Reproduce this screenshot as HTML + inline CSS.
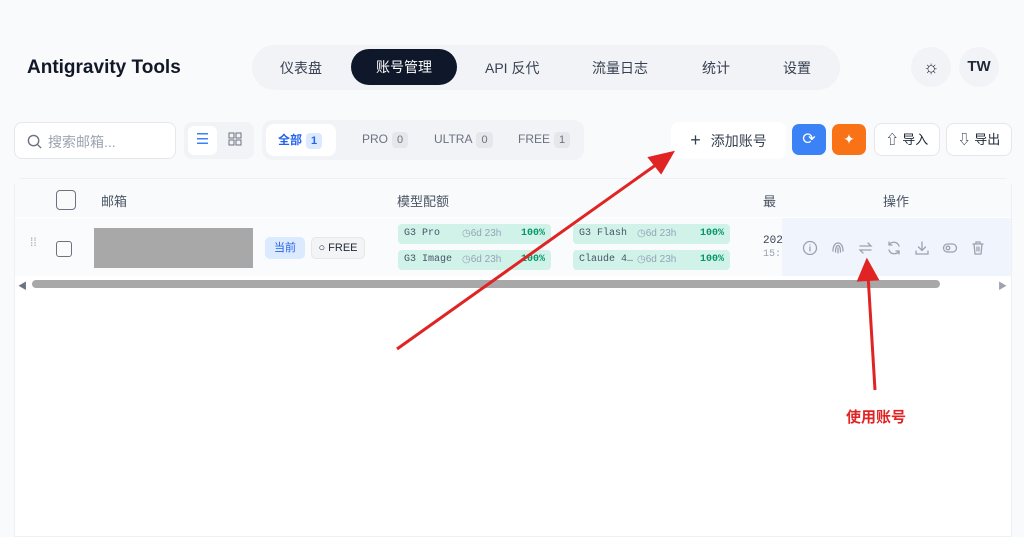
<!DOCTYPE html>
<html><head><meta charset="utf-8"><style>
*{box-sizing:border-box;margin:0;padding:0}
body{width:1024px;height:537px;overflow:hidden;background:#f8fafc;font-family:"Liberation Sans","Noto Sans CJK SC",sans-serif;color:#1f2937;position:relative}
.abs{position:absolute}
.nav{left:252px;top:45px;width:588px;height:45px;background:#f1f3f6;border-radius:23px}
.nav span{position:absolute;top:13px;font-size:14px;color:#374151}
.act{left:351px;top:49px;width:106px;height:36px;background:#0f172a;border-radius:18px;color:#fff;font-size:14px;text-align:center;line-height:36px}
.circ{width:40px;height:40px;border-radius:20px;background:#f1f3f6;text-align:center;line-height:40px;font-weight:bold;font-size:15px}
.btn{background:#fff;border:1px solid #e5e7eb;border-radius:8px;font-size:13px;text-align:center}
.chip{background:#d1f2e8;border-radius:4px;height:20px;font-family:"Liberation Mono",monospace;font-size:10px;color:#475569;line-height:20px;padding-left:6px}
.chip b{position:absolute;right:6px;color:#059669}
.chip i{position:absolute;left:64px;font-style:normal;color:#94a3b8;font-family:"Liberation Sans",sans-serif}
.cnt{display:inline-block;background:#e5e7eb;border-radius:4px;padding:0 5px;font-size:11px;margin-left:4px;line-height:16px}
</style></head><body>
<div class="abs" style="left:27px;top:57px;font-size:19px;font-weight:bold;color:#111827">Antigravity Tools</div>
<div class="abs nav">
<span style="left:28px">仪表盘</span><span style="left:233px">API 反代</span><span style="left:340px">流量日志</span><span style="left:450px">统计</span><span style="left:531px">设置</span></div>
<div class="abs act">账号管理</div>
<div class="abs circ" style="left:911px;top:47px;font-size:18px;font-weight:normal">☼</div>
<div class="abs circ" style="left:959px;top:47px">TW</div>

<div class="abs btn" style="left:14px;top:122px;width:162px;height:37px;text-align:left;color:#9ca3af;font-size:14px;padding:9px 0 0 12px">
<svg width="15" height="15" viewBox="0 0 16 16" style="vertical-align:-2px;margin-right:6px"><circle cx="7" cy="7" r="5.5" fill="none" stroke="#6b7280" stroke-width="1.5"/><path d="M11 11l4 4" stroke="#6b7280" stroke-width="1.5"/></svg>搜索邮箱...</div>
<div class="abs" style="left:184px;top:122px;width:70px;height:37px;background:#f1f3f6;border-radius:8px"></div>
<div class="abs" style="left:188px;top:126px;width:29px;height:29px;background:#fff;border-radius:6px;color:#3b82f6;text-align:center;line-height:28px;font-size:15px">☰</div>
<div class="abs" style="left:228px;top:132px;width:14px;height:14px"><svg width="14" height="14"><rect x="1" y="1" width="5" height="5" fill="none" stroke="#6b7280"/><rect x="8" y="1" width="5" height="5" fill="none" stroke="#6b7280"/><rect x="1" y="8" width="5" height="5" fill="none" stroke="#6b7280"/><rect x="8" y="8" width="5" height="5" fill="none" stroke="#6b7280"/></svg></div>
<div class="abs" style="left:262px;top:120px;width:322px;height:40px;background:#f1f3f6;border-radius:10px"></div>
<div class="abs" style="left:266px;top:124px;width:70px;height:32px;background:#fff;border-radius:8px;font-size:12px;color:#2563eb;font-weight:bold;line-height:32px;padding-left:12px">全部<span class="cnt" style="background:#dbeafe">1</span></div>
<div class="abs" style="left:362px;top:132px;font-size:12px;color:#6b7280">PRO<span class="cnt">0</span></div>
<div class="abs" style="left:434px;top:132px;font-size:12px;color:#6b7280">ULTRA<span class="cnt">0</span></div>
<div class="abs" style="left:518px;top:132px;font-size:12px;color:#6b7280">FREE<span class="cnt">1</span></div>

<div class="abs btn" style="left:671px;top:122px;width:115px;height:37px;border:none;font-size:14px;line-height:37px;color:#374151"><span style="font-size:18px;margin-right:10px">+</span>添加账号</div>
<div class="abs" style="left:792px;top:124px;width:34px;height:31px;background:#3b82f6;border-radius:7px;color:#fff;text-align:center;line-height:31px;font-size:16px">⟳</div>
<div class="abs" style="left:832px;top:124px;width:34px;height:31px;background:#f97316;border-radius:7px;color:#fff;text-align:center;line-height:31px;font-size:14px">✦</div>
<div class="abs btn" style="left:874px;top:123px;width:66px;height:33px;line-height:31px">⇧ 导入</div>
<div class="abs btn" style="left:946px;top:123px;width:66px;height:33px;line-height:31px">⇩ 导出</div>

<div class="abs" style="left:14px;top:178px;width:998px;height:359px;background:#fff;border:1px solid #eef0f3;border-radius:8px 8px 0 0"></div>
<div class="abs" style="left:15px;top:179px;width:996px;height:38px;background:#f8fafc"></div>
<div class="abs" style="left:56px;top:190px;width:20px;height:20px;border:1.5px solid #6b7280;border-radius:4px"></div>
<div class="abs" style="left:101px;top:191px;font-size:13px;color:#4b5563">邮箱</div>
<div class="abs" style="left:397px;top:191px;font-size:13px;color:#4b5563">模型配额</div>
<div class="abs" style="left:763px;top:191px;font-size:13px;color:#4b5563">最</div>
<div class="abs" style="left:883px;top:191px;font-size:13px;color:#4b5563">操作</div>
<div class="abs" style="left:15px;top:218px;width:996px;height:58px;background:#f9fbfd"></div>
<div class="abs" style="left:782px;top:218px;width:229px;height:58px;background:#f0f4fc"></div>
<div class="abs" style="left:30px;top:240px;font-size:12px;color:#9ca3af;line-height:5px">⁞⁞</div>
<div class="abs" style="left:56px;top:241px;width:16px;height:16px;border:1.5px solid #6b7280;border-radius:3px"></div>
<div class="abs" style="left:94px;top:228px;width:159px;height:40px;background:#a8a8a8"></div>
<div class="abs" style="left:265px;top:237px;width:40px;height:22px;background:#dbeafe;border-radius:5px;color:#2563eb;font-size:11px;text-align:center;line-height:22px">当前</div>
<div class="abs" style="left:311px;top:237px;width:54px;height:22px;background:#f3f4f6;border:1px solid #e5e7eb;border-radius:5px;font-size:11px;text-align:center;line-height:20px">○ FREE</div>
<div class="abs chip" style="left:398px;top:224px;width:153px">G3 Pro<i>◷6d 23h</i><b>100%</b></div>
<div class="abs chip" style="left:398px;top:250px;width:153px">G3 Image<i>◷6d 23h</i><b>100%</b></div>
<div class="abs chip" style="left:573px;top:224px;width:157px">G3 Flash<i>◷6d 23h</i><b>100%</b></div>
<div class="abs chip" style="left:573px;top:250px;width:157px">Claude 4…<i>◷6d 23h</i><b>100%</b></div>
<div class="abs" style="left:763px;top:235px;font-size:11px;color:#374151;font-family:'Liberation Mono',monospace">202</div>
<div class="abs" style="left:763px;top:249px;font-size:10px;color:#9ca3af;font-family:'Liberation Mono',monospace">15:</div>
<svg class="abs" style="left:800px;top:238px" width="190" height="20" fill="none" stroke="#9ca3af" stroke-width="1.3" stroke-linecap="round">
<circle cx="10" cy="10" r="6.5"/><path d="M10 9v4M10 7v0"/>
<g transform="translate(28,0)"><path d="M5 13c0-5 2-8 5-8s5 3 5 8M7.5 14c0-4 1-6.5 2.5-6.5s2.5 2.5 2.5 6.5M10 10v5"/></g>
<g transform="translate(56,0)"><path d="M4 8h11l-3-3M15 12H4l3 3"/></g>
<g transform="translate(84,0)"><path d="M15 8a5.5 5.5 0 0 0-10-1M5 12a5.5 5.5 0 0 0 10 1M5 4v3h3M15 16v-3h-3"/></g>
<g transform="translate(112,0)"><path d="M10 4v8M6.5 9l3.5 3.5 3.5-3.5M4 13v3h12v-3"/></g>
<g transform="translate(140,0)"><rect x="3.5" y="6" width="13" height="8" rx="4"/><circle cx="8" cy="10" r="1.8"/></g>
<g transform="translate(168,0)"><path d="M5 6h10M8 6V4h4v2M6 6l1 10h6l1-10M9 9v4M11 9v4"/></g>
</svg>
<div class="abs" style="left:18px;top:279px;font-size:9px;color:#6b7280">◀</div>
<div class="abs" style="left:32px;top:280px;width:908px;height:8px;background:#a8a8a8;border-radius:4px"></div>
<div class="abs" style="left:998px;top:279px;font-size:9px;color:#9ca3af">▶</div>

<svg class="abs" style="left:0;top:0" width="1024" height="537">
<path d="M397 349L660 162" stroke="#e02424" stroke-width="3"/>
<path d="M672 153L650 158L661 172Z" fill="#e02424" stroke="#e02424" stroke-width="3"/>
<path d="M875 390L868 275" stroke="#e02424" stroke-width="3"/>
<path d="M867 261L859 280L877 279Z" fill="#e02424" stroke="#e02424" stroke-width="3"/>
</svg>
<div class="abs" style="left:846px;top:406px;font-size:15px;font-weight:bold;color:#e02424">使用账号</div>
</body></html>
